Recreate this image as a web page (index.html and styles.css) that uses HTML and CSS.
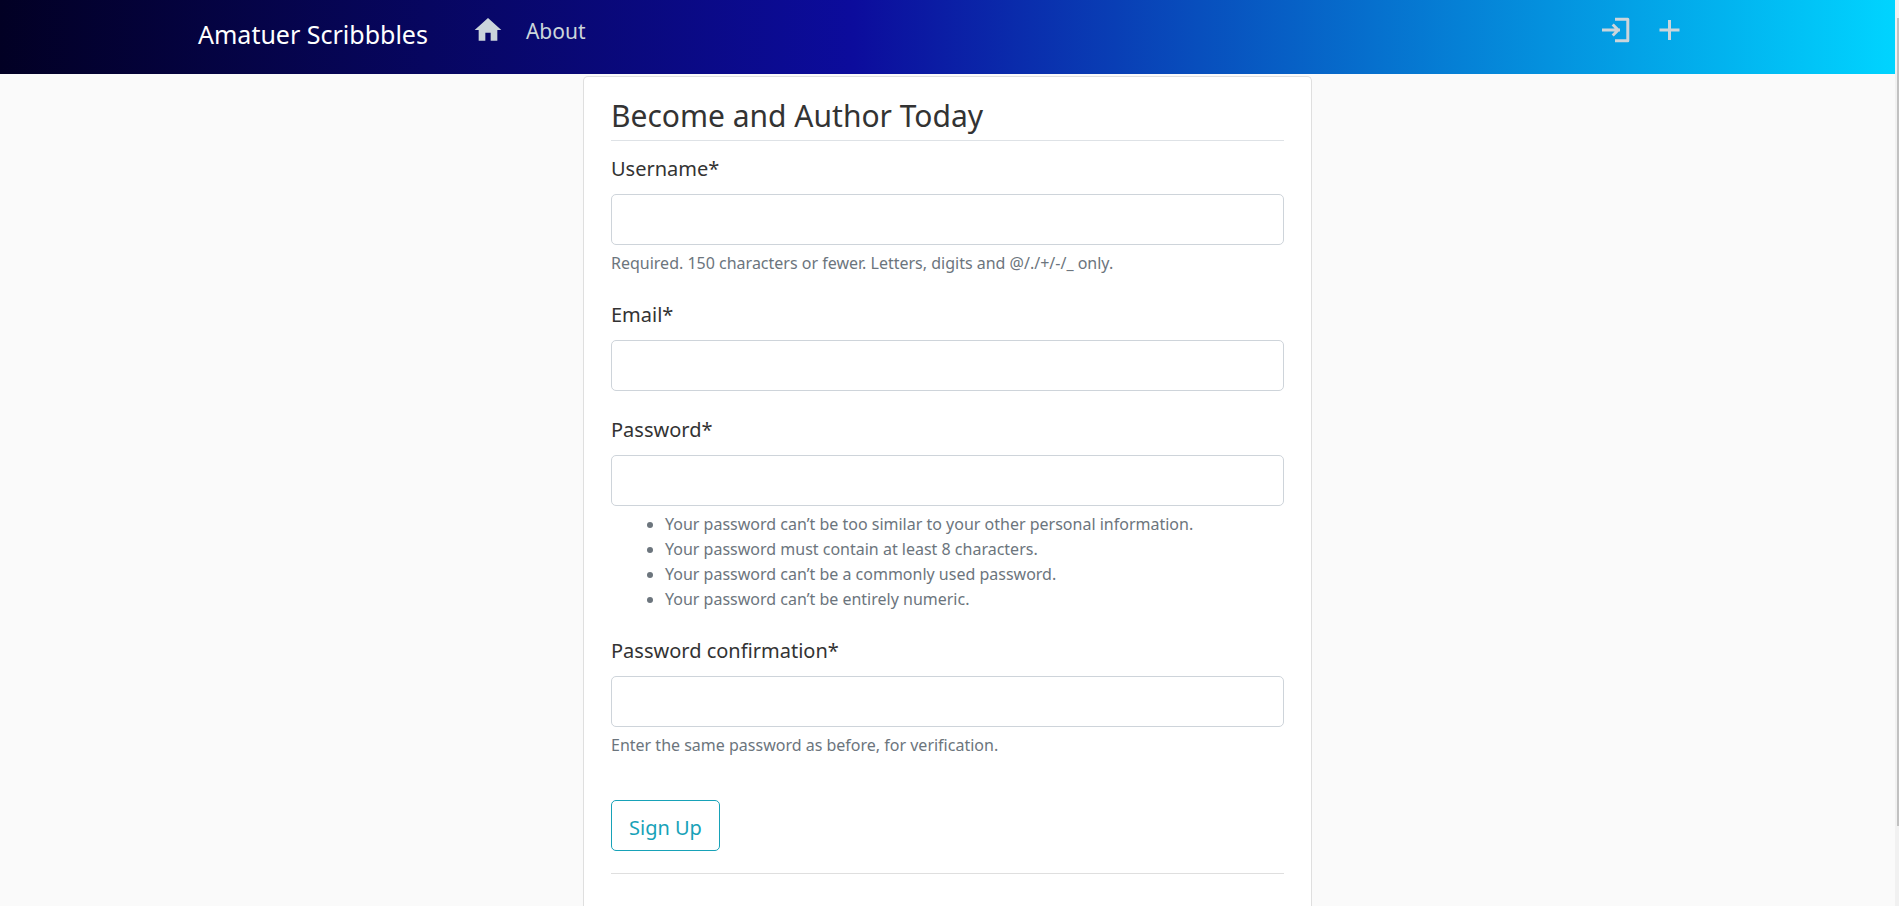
FILE: index.html
```html
<!DOCTYPE html>
<html lang="en">
<head>
<meta charset="utf-8">
<meta name="viewport" content="width=device-width, initial-scale=1">
<title>Amatuer Scribbbles</title>
<link rel="stylesheet" href="styles.css">
</head>
<body>
<div class="page">
  <header class="navbar">
    <nav class="navbar-inner">
      <a class="brand" href="#">Amatuer Scribbbles</a>
      <a class="nav-icon home" href="#" aria-label="Home">
        <svg viewBox="0 0 24 24" width="32" height="32"><path fill="currentColor" d="M10 20v-6h4v6h5v-8h3L12 3 2 12h3v8z"/></svg>
      </a>
      <a class="nav-link" href="#">About</a>
      <div class="nav-right">
        <a class="nav-icon" href="#" aria-label="Log in">
          <svg viewBox="0 0 32 32" width="32" height="32" fill="none" stroke="currentColor" stroke-width="3" stroke-linejoin="round"><path d="M16 5.300H28.800V26.700H16M3 16H21M13.700 10.500l5.500 5.500-5.500 5.500"/></svg>
        </a>
        <a class="nav-icon" href="#" aria-label="Register">
          <svg viewBox="0 0 32 32" width="32" height="32" stroke="currentColor" stroke-width="3"><path d="M6.500 16H26.500M16.500 6V26"/></svg>
        </a>
      </div>
    </nav>
  </header>
  <main class="card">
    <form class="form">
      <h1 class="title">Become and Author Today</h1>
      <div class="field">
        <label for="username">Username*</label>
        <input id="username" type="text">
        <small class="help">Required. 150 characters or fewer. Letters, digits and @/./+/-/_ only.</small>
      </div>
      <div class="field">
        <label for="email">Email*</label>
        <input id="email" type="email">
      </div>
      <div class="field">
        <label for="password">Password*</label>
        <input id="password" type="password">
        <ul class="help help-list">
          <li>Your password can’t be too similar to your other personal information.</li>
          <li>Your password must contain at least 8 characters.</li>
          <li>Your password can’t be a commonly used password.</li>
          <li>Your password can’t be entirely numeric.</li>
        </ul>
      </div>
      <div class="field">
        <label for="confirm">Password confirmation*</label>
        <input id="confirm" type="password">
        <small class="help">Enter the same password as before, for verification.</small>
      </div>
      <button class="submit" type="submit">Sign Up</button>
    </form>
    <hr class="divider">
  </main>
</div>
<div class="scrollbar" aria-hidden="true"></div>
</body>
</html>
```
FILE: styles.css
```css
* { box-sizing: border-box; }
body {
  margin: 0;
  background: #fafafa;
  color: #333;
  font: 20px/30px "Noto Sans", "Open Sans", sans-serif;
}
.page {
  display: flex;
  flex-direction: column;
  min-height: 100vh;
  margin-right: 4px;
}
.navbar {
  padding: 10px 24px 24px;
  background: linear-gradient(90deg, #020024 0%, #0c0c9c 45%, #00d4ff 100%);
}
.navbar-inner {
  display: flex;
  align-items: center;
  max-width: 1499px;
  height: 40px;
  margin: 0 auto;
}
.brand {
  padding-top: 8px;
  color: #fff;
  font-size: 25px;
  text-decoration: none;
}
.nav-link, .nav-icon { color: #cbd5db; text-decoration: none; }
.nav-icon { display: flex; }
.home { margin: 0 22px 0 44px; }
.nav-link { padding-top: 2px; font-size: 21px; }
.nav-right {
  display: flex;
  gap: 22px;
  margin-left: auto;
  padding-right: 12px;
}
.card {
  flex: 1;
  width: 100%;
  max-width: 729px;
  margin: 2px auto 0;
  padding: 18px 27px 0;
  background: #fff;
  border: 1px solid #dfdfdf;
  border-bottom: 0;
  border-radius: 5px 5px 0 0;
}
.title {
  margin: 0 0 12px;
  padding-bottom: 3px;
  border-bottom: 1px solid #dee2e6;
  font-size: 30px;
  font-weight: 400;
  line-height: 42px;
}
.field { margin-bottom: 23px; }
.field label { display: block; margin-bottom: 10px; line-height: 31px; }
.field input {
  display: block;
  width: 100%;
  height: 51px;
  padding: 8px 15px;
  background: #fff;
  border: 1px solid #ced4da;
  border-radius: 5px;
  font: inherit;
}
.help {
  display: block;
  margin-top: 6px;
  color: #6c757d;
  font-size: 16px;
  line-height: 25px;
}
.help-list { margin-bottom: 0; padding-left: 54px; }
.submit {
  display: block;
  height: 51px;
  margin-top: 42px;
  padding: 4px 17px 0;
  background: transparent;
  border: 1px solid #17a2b8;
  border-radius: 5px;
  color: #17a2b8;
  font: inherit;
}
.divider { margin: 22px 0; border: 0; border-top: 1px solid #dfdfdf; }
.scrollbar {
  position: fixed;
  top: 0;
  right: 0;
  bottom: 0;
  width: 4px;
  padding: 18px 0 80px 2px;
  background: linear-gradient(#c1c1c1, #c1c1c1) content-box, #f1f1f1;
}
```
